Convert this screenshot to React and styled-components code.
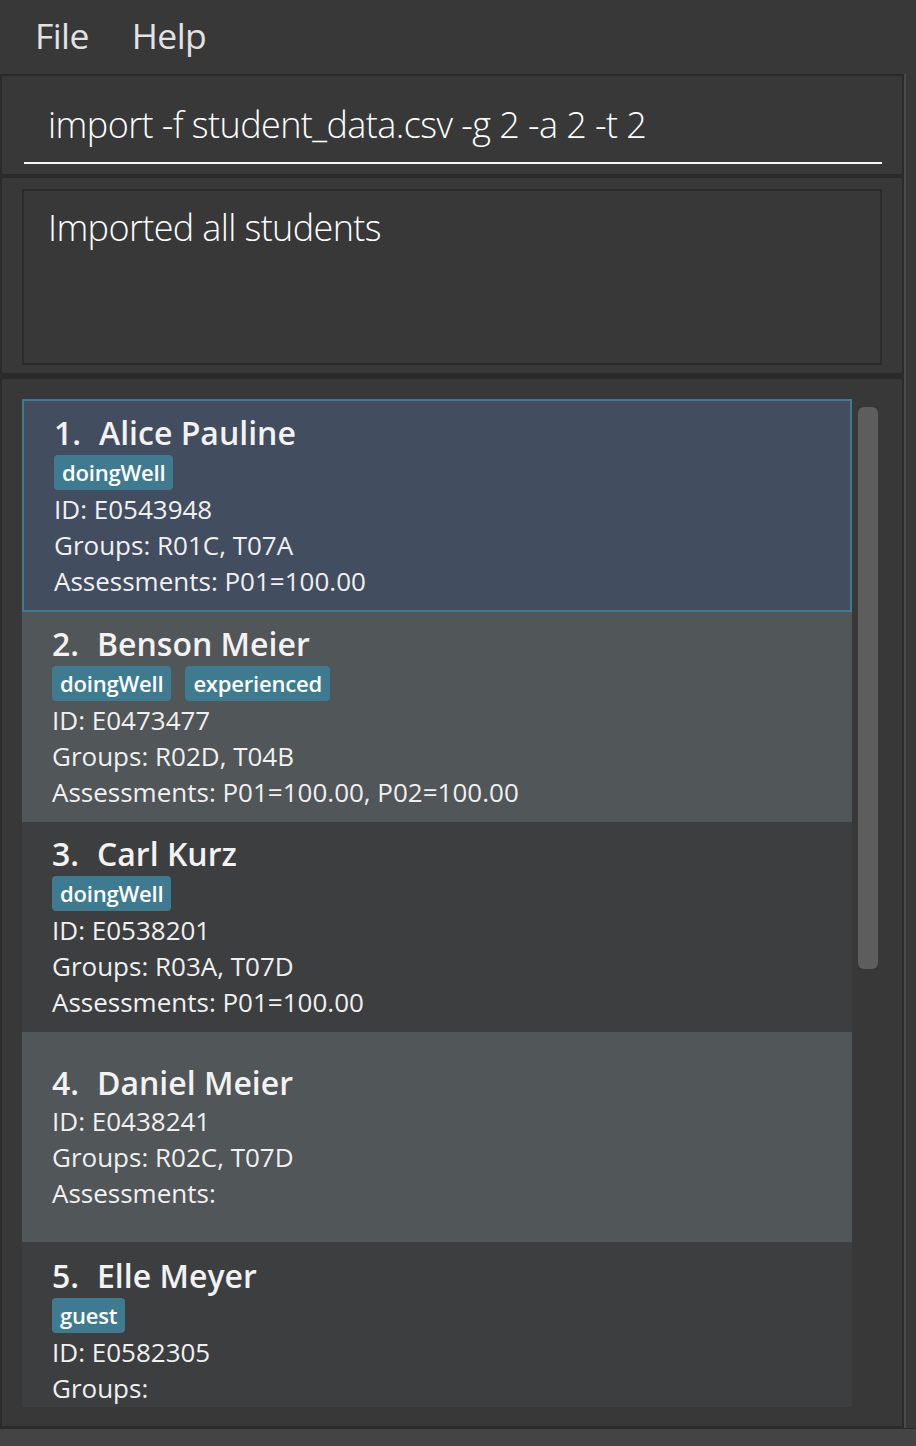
import React from "react";
import styled, { createGlobalStyle } from "styled-components";

const GlobalStyle = createGlobalStyle`
  html, body { margin: 0; padding: 0; background: #383838; }
  body { font-family: "Open Sans", "Noto Sans", sans-serif; }
  * { box-sizing: border-box; }
`;

const Window = styled.div`
  width: 916px;
  height: 1446px;
  background: #383838;
  display: flex;
  flex-direction: column;
  overflow: hidden;
`;

const MenuBar = styled.div`
  height: 74px;
  display: flex;
  align-items: center;
  padding-left: 35px;
  gap: 43px;
  flex-shrink: 0;
`;

const MenuItem = styled.span`
  font-size: 35.5px;
  font-weight: 400;
  color: #e2e2e2;
  letter-spacing: -0.6px;
  line-height: 1;
  padding-bottom: 2px;
`;

const Main = styled.div`
  width: 906px;
  display: flex;
  flex-direction: column;
  border-right: 2px solid #4a4a4a;
`;

const Panel = styled.div`
  background: #383838;
  border: 2px solid #2b2b2b;
  border-top-width: ${(p) => p.$topBorder || 2}px;
  padding: ${(p) => p.$pad};
`;

const CommandInput = styled.div`
  height: 88px;
  border-bottom: 2px solid #f5f5f5;
  padding: 27px 0 0 24px;
  font-size: 36px;
  font-weight: 300;
  line-height: 44px;
  color: #ffffff;
  letter-spacing: -0.58px;
  white-space: nowrap;
`;

const ResultBox = styled.div`
  height: 176px;
  border: 2px solid #2b2b2b;
  padding: 15px 0 0 24px;
  font-size: 36px;
  font-weight: 300;
  line-height: 44px;
  color: #ffffff;
  letter-spacing: -0.63px;
`;

const ListArea = styled.div`
  display: flex;
  gap: 6px;
  height: 1008px;
`;

const ListViewport = styled.div`
  width: 830px;
  height: 1008px;
  overflow: hidden;
  display: flex;
  flex-direction: column;
`;

const ScrollTrack = styled.div`
  width: 20px;
  padding-top: 8px;
`;

const ScrollThumb = styled.div`
  width: 20px;
  height: 562px;
  border-radius: 6px;
  background: #5d5d5d;
`;

const cardBg = {
  selected: "#424d5f",
  even: "#515658",
  odd: "#3c3e3f",
};

const Card = styled.div`
  flex-shrink: 0;
  height: ${(p) => (p.$selected ? 213 : 210)}px;
  background: ${(p) => cardBg[p.$variant]};
  border: ${(p) => (p.$selected ? "2px solid #3e7b91" : "none")};
  padding-left: 30px;
  padding-top: ${(p) => (p.$cut ? 14 : 0)}px;
  display: flex;
  flex-direction: column;
  justify-content: ${(p) => (p.$cut ? "flex-start" : "center")};
  color: #f0f0f0;
`;

const Name = styled.div`
  font-size: 32px;
  font-weight: 600;
  line-height: 40px;
  color: #f2f2f2;
  white-space: nowrap;
`;

const Num = styled.span`
  display: inline-block;
  width: 45px;
`;

const Tags = styled.div`
  display: flex;
  gap: 14px;
  margin-top: 2px;
  margin-bottom: 1px;
`;

const Tag = styled.span`
  height: 35px;
  padding: 0 8px;
  border-radius: 4px;
  background: #3e7b91;
  color: #ffffff;
  font-size: 22px;
  font-weight: 600;
  line-height: 35px;
  letter-spacing: -0.2px;
`;

const Detail = styled.div`
  font-size: 26px;
  line-height: 36px;
  color: #f0f0f0;
  white-space: nowrap;
`;

const StatusBar = styled.div`
  flex: 1;
  background: #444444;
  border-top: 1px solid #2b2b2b;
`;

const students = [
  { name: "Alice Pauline", tags: ["doingWell"], id: "E0543948", groups: "R01C, T07A", assess: "P01=100.00" },
  { name: "Benson Meier", tags: ["doingWell", "experienced"], id: "E0473477", groups: "R02D, T04B", assess: "P01=100.00, P02=100.00" },
  { name: "Carl Kurz", tags: ["doingWell"], id: "E0538201", groups: "R03A, T07D", assess: "P01=100.00" },
  { name: "Daniel Meier", tags: [], id: "E0438241", groups: "R02C, T07D", assess: "" },
  { name: "Elle Meyer", tags: ["guest"], id: "E0582305", groups: "", assess: "" },
];

function StudentCard({ s, index }) {
  const selected = index === 0;
  const variant = selected ? "selected" : index % 2 === 1 ? "even" : "odd";
  return (
    <Card $selected={selected} $variant={variant} $cut={index === 4}>
      <Name>
        <Num>{index + 1}.</Num>
        {s.name}
      </Name>
      {s.tags.length > 0 && (
        <Tags>
          {s.tags.map((t) => (
            <Tag key={t}>{t}</Tag>
          ))}
        </Tags>
      )}
      <Detail>ID: {s.id}</Detail>
      <Detail>Groups: {s.groups}</Detail>
      <Detail>Assessments: {s.assess}</Detail>
    </Card>
  );
}

export default function App() {
  return (
    <>
      <GlobalStyle />
      <Window>
        <MenuBar>
          <MenuItem>File</MenuItem>
          <MenuItem>Help</MenuItem>
        </MenuBar>
        <Main>
          <Panel $pad="0 20px 10px 22px">
            <CommandInput>import -f student_data.csv -g 2 -a 2 -t 2</CommandInput>
          </Panel>
          <Panel $pad="11px 20px 8px 20px">
            <ResultBox>Imported all students</ResultBox>
          </Panel>
          <Panel $topBorder={4} $pad="20px 24px 19px 20px">
            <ListArea>
              <ListViewport>
                {students.map((s, i) => (
                  <StudentCard key={s.id} s={s} index={i} />
                ))}
              </ListViewport>
              <ScrollTrack>
                <ScrollThumb />
              </ScrollTrack>
            </ListArea>
          </Panel>
        </Main>
        <StatusBar />
      </Window>
    </>
  );
}
